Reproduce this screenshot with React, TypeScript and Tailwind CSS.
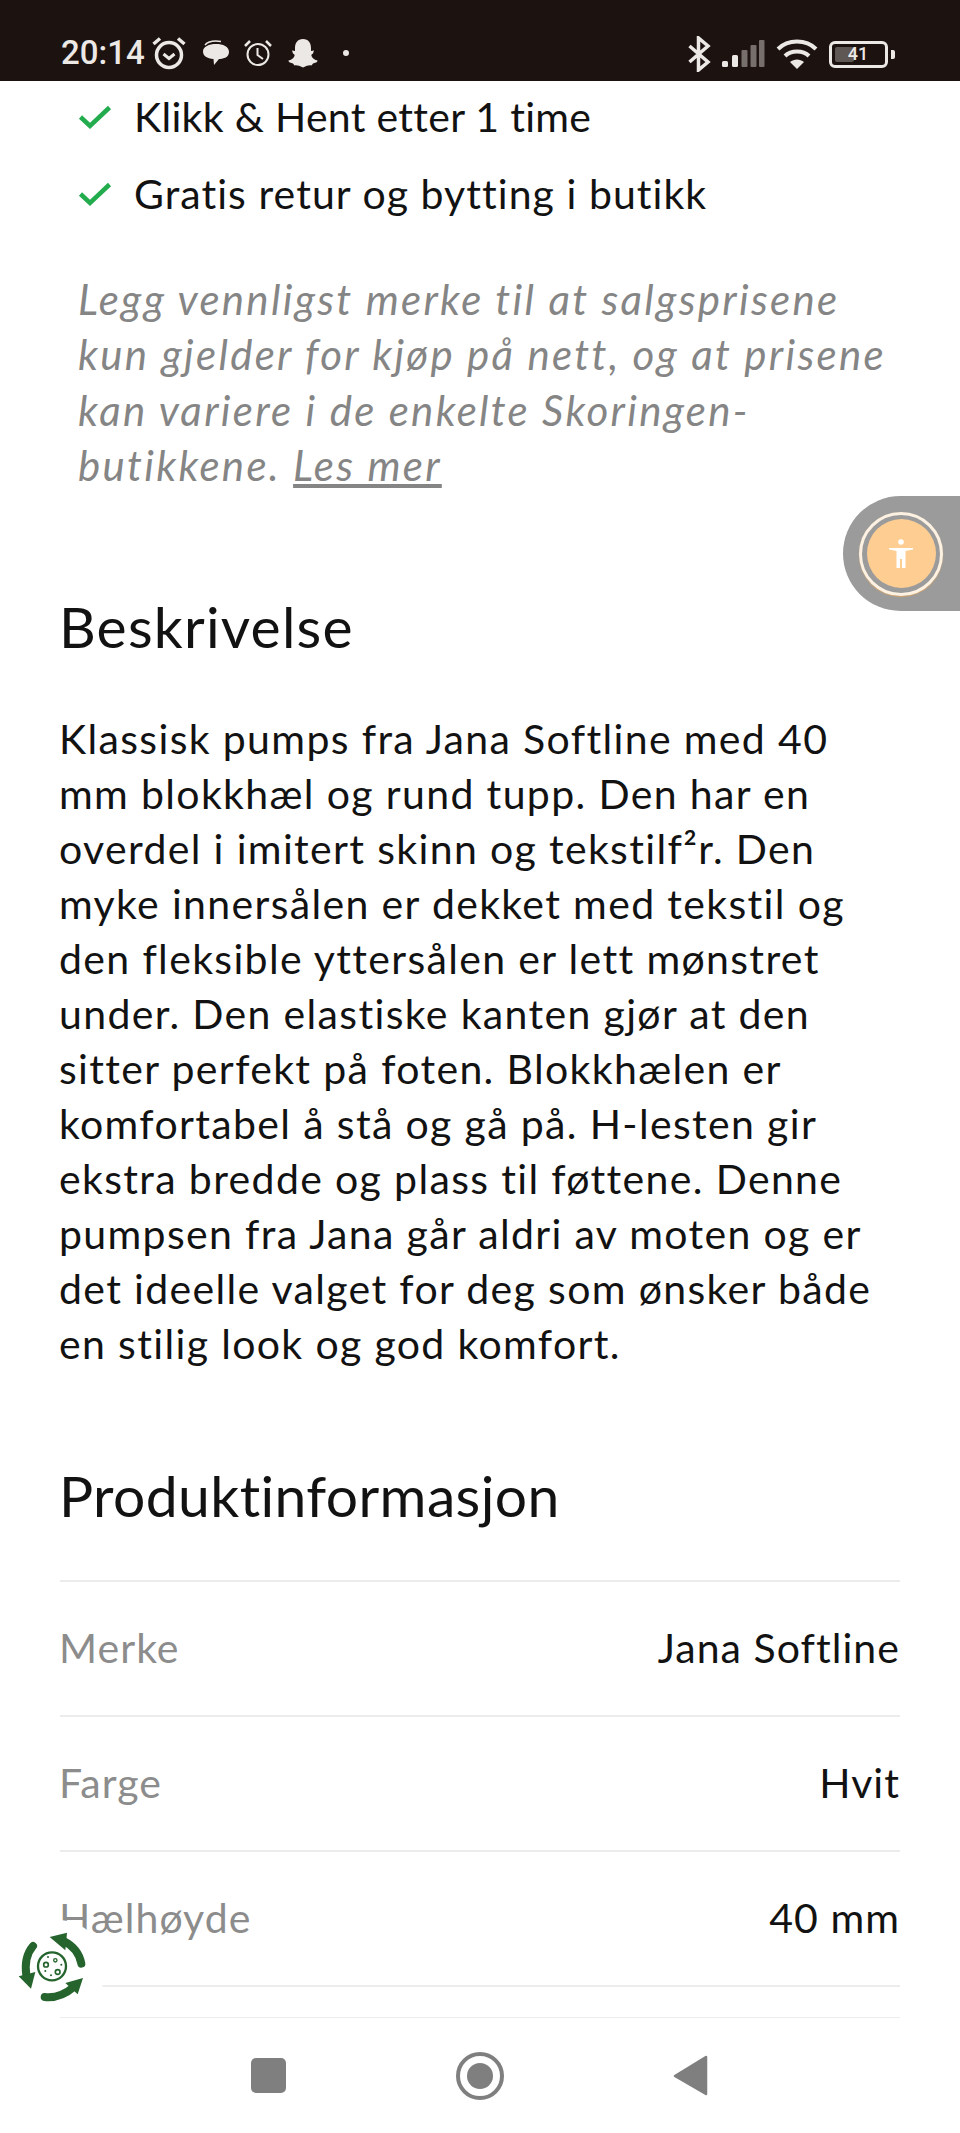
import React from "react";

const rows = [
  { label: "Merke", value: "Jana Softline" },
  { label: "Farge", value: "Hvit" },
  { label: "Hælhøyde", value: "40 mm" },
];

const CheckMark = () => (
  <svg width="34" height="26" viewBox="0 0 34 26" className="shrink-0">
    <path d="M2.5 13 L12 22 L31.5 3.5" fill="none" stroke="#22ac4d" strokeWidth="4.5" />
  </svg>
);

const StatusBar = () => (
  <div className="h-[81px] bg-[#1c1210] flex items-end pb-[9px] pl-[61px] pr-[65px] justify-between text-[#ece8e5] shrink-0">
    <div className="flex items-center">
      <span className="font-['Roboto',sans-serif] font-medium text-[33px] leading-[38px] mr-[6px]">20:14</span>
      <svg width="36" height="34" viewBox="0 0 36 34" fill="none" stroke="currentColor">
        <circle cx="18" cy="19" r="12.5" strokeWidth="3.5" />
        <path d="M12.5 18 L18 22.5 L23.5 18" strokeWidth="3" />
        <path d="M2.5 8 L9 2.5 M33.5 8 L27 2.5" strokeWidth="3.5" />
      </svg>
      <svg width="28" height="26" viewBox="0 0 28 26" className="ml-[15px]" fill="currentColor">
        <path d="M14 4 C21 4 27 6.500 27 12 C27 17 22 19 17 19 L12 25 L11.500 19 C5 18.500 1 16 1 11.500 C1 6.500 7 4 14 4 Z" />
        <path d="M3 5 C6 1.500 12 0.500 19 1.500" fill="none" stroke="currentColor" strokeWidth="1.500" />
      </svg>
      <svg width="30" height="30" viewBox="0 0 30 30" className="ml-[13px]" fill="none" stroke="currentColor" strokeWidth="2">
        <circle cx="15" cy="16.500" r="10.500" />
        <path d="M14.500 10 V17 L20 21" />
        <path d="M2 8 L7 3 M28 8 L23 3" strokeWidth="2.500" />
      </svg>
      <svg width="30" height="30" viewBox="0 0 30 30" className="ml-[15px]" fill="currentColor">
        <path d="M15 1 C20.500 1 23 5 23 10 L23 13 L26 12.500 L25 15.500 C24 16.500 23 16.500 23.500 18 C24.500 20.500 27 22 29.500 22.500 C29.500 24.500 27 25 25 25.500 L23.500 27.500 C20.500 27 19 28 15 29.500 C11 28 9.500 27 6.500 27.500 L5 25.500 C3 25 .5 24.500 .5 22.500 C3 22 5.500 20.500 6.500 18 C7 16.500 6 16.500 5 15.500 L4 12.500 L7 13 L7 10 C7 5 9.500 1 15 1 Z" />
      </svg>
      <span className="ml-[25px] w-[6px] h-[6px] rounded-full bg-current" />
    </div>
    <div className="flex items-center gap-[10px]">
      <svg width="24" height="36" viewBox="0 0 24 36" fill="none" stroke="currentColor" strokeWidth="3.500">
        <path d="M2.500 10 L21 26 L11.500 34 V2 L21 10 L2.500 26" />
      </svg>
      <svg width="44" height="28" viewBox="0 0 44 28">
        <rect x="1" y="21" width="6" height="6" rx="1.500" fill="#ece8e5" />
        <rect x="11" y="15" width="6" height="12" rx="1.500" fill="#ece8e5" />
        <rect x="20.500" y="10" width="6" height="17" rx="1" fill="#766f6c" />
        <rect x="29.500" y="5" width="6" height="22" rx="1" fill="#766f6c" />
        <rect x="38" y="0" width="5.500" height="27" rx="1" fill="#766f6c" />
      </svg>
      <svg width="42" height="32" viewBox="0 0 42 32" fill="none" stroke="currentColor" strokeWidth="4" className="ml-[1px]">
        <path d="M2 11 C12 1 30 1 40 11" />
        <path d="M9 18 C15 12 27 12 33 18" />
        <path d="M21 31 L14 24 C18 20.500 24 20.500 28 24 Z" fill="currentColor" stroke="none" />
      </svg>
      <div className="flex items-center ml-[1px]">
        <div className="relative w-[59px] h-[27px] rounded-[6px] border-[3px] border-current p-[3px]">
          <div className="h-full w-[41%] bg-[#5e5754] rounded-[2px]" />
          <span className="absolute inset-0 flex items-center justify-center font-['Roboto',sans-serif] font-medium text-[18px] leading-none pr-[1px]">41</span>
        </div>
        <div className="w-[4px] h-[9px] ml-[3px] bg-current rounded-r-[2px]" />
      </div>
    </div>
  </div>
);

const NavBar = () => (
  <div className="h-[115px] bg-white flex items-center absolute left-0 right-0 bottom-0 pl-[251px]">
    <div className="w-[35px] h-[35px] rounded-[5px] bg-[#7f7f7f]" />
    <div className="w-[48px] h-[48px] rounded-full border-[4px] border-[#7f7f7f] flex items-center justify-center ml-[170px]">
      <div className="w-[26px] h-[26px] rounded-full bg-[#7f7f7f]" />
    </div>
    <svg width="36" height="42" viewBox="0 0 36 42" className="ml-[169px]">
      <path d="M33 2 V39 L2 21 Z" fill="#7f7f7f" stroke="#7f7f7f" strokeWidth="2.500" strokeLinejoin="round" />
    </svg>
  </div>
);

export default function App() {
  return (
    <div className="relative h-[2133px] w-[960px] overflow-hidden bg-white flex flex-col font-['Lato',sans-serif] text-[#121212] [font-variant-ligatures:none]">
      <StatusBar />
      <main className="pl-[59px] pr-[60px]">
        <ul className="pl-[19px] pt-[8px] flex flex-col gap-[22px] text-[41px] leading-[55px] tracking-[1.05px]">
          <li className="flex items-center gap-[22px] tracking-[0.3px]"><CheckMark />Klikk &amp; Hent etter 1 time</li>
          <li className="flex items-center gap-[22px]"><CheckMark />Gratis retur og bytting i butikk</li>
        </ul>
        <p className="mt-[51px] pl-[19px] text-[42px] leading-[55.4px] italic text-[#858585] tracking-[2.3px]">
          Legg vennligst merke til at salgsprisene kun gjelder for kjøp på nett, og at prisene kan variere i de enkelte Skoringen-butikkene. <a className="underline" href="#">Les mer</a>
        </p>
        <h2 className="mt-[99px] text-[57px] leading-[66px] font-normal tracking-[1.2px]">Beskrivelse</h2>
        <p className="mt-[52px] pr-[10px] text-[41px] leading-[55px] tracking-[1.35px]">
          Klassisk pumps fra Jana Softline med 40 mm blokkhæl og rund tupp. Den har en overdel i imitert skinn og tekstilf²r. Den myke innersålen er dekket med tekstil og den fleksible yttersålen er lett mønstret under. Den elastiske kanten gjør at den sitter perfekt på foten. Blokkhælen er komfortabel å stå og gå på. H-lesten gir ekstra bredde og plass til føttene. Denne pumpsen fra Jana går aldri av moten og er det ideelle valget for deg som ønsker både en stilig look og god komfort.
        </p>
        <h2 className="mt-[91px] text-[57px] leading-[66px] font-normal tracking-[0.4px]">Produktinformasjon</h2>
        <dl className="mt-[52px] ml-[1px] border-t-2 border-[#ececec]">
          {rows.map(row => <div key={row.label} className="h-[135px] border-b-2 border-[#ececec] flex items-center justify-between text-[41px] tracking-[1.05px]">
              <dt className="text-[#8c8c8c] -ml-[1px]">{row.label}</dt>
              <dd>{row.value}</dd>
            </div>)}
          <div className="h-[32px] border-b-2 border-[#ececec]" />
        </dl>
      </main>

      <div className="absolute right-0 top-[496px] w-[117px] h-[115px] bg-[#9b9b9b] rounded-l-[58px] flex items-center pl-[16px]">
        <div className="w-[84px] h-[84px] rounded-full border-[3px] border-[#fdf1e2] shadow-[0_1px_1px_#d9a566] flex items-center justify-center">
          <div className="w-[69px] h-[69px] rounded-full bg-[#fdcd92] flex items-center justify-center">
            <svg width="24" height="29" viewBox="0 0 24 29" fill="white">
              <circle cx="12" cy="3" r="2.800" />
              <path d="M0 9 H24 V10.500 L16.500 12 V29 H13 V20 H11 V29 H7.500 V12 L0 10.500 Z" />
            </svg>
          </div>
        </div>
      </div>

      <NavBar />

      <div className="absolute left-[10px] top-[1920px] w-[96px] h-[96px] rounded-full bg-white">
        <svg width="80" height="80" viewBox="0 0 240 240" fill="none" stroke="#25642c" className="absolute left-[2px] top-[7px]">
          <path d="M155 42 Q200 65 208 110" strokeWidth="24" strokeLinecap="round" />
          <path d="M113 30 L165 17 L160 70 Z" fill="#25642c" stroke="none" />
          <path d="M63 57 Q35 90 43 145" strokeWidth="24" strokeLinecap="round" />
          <path d="M20 148 L70 135 L57 185 Z" fill="#25642c" stroke="none" />
          <path d="M98 210 Q145 215 185 180" strokeWidth="24" strokeLinecap="round" />
          <path d="M213 153 L160 168 L197 202 Z" fill="#25642c" stroke="none" />
          <circle cx="120" cy="118" r="42" strokeWidth="7" />
          <circle cx="102" cy="113" r="7" strokeWidth="5" />
          <circle cx="137" cy="135" r="7" strokeWidth="5" />
          <circle cx="130" cy="100" r="5" strokeWidth="4" />
          <g fill="#25642c" stroke="none">
            <circle cx="108" cy="90" r="3" />
            <circle cx="148" cy="113" r="3" />
            <circle cx="100" cy="132" r="3" />
            <circle cx="117" cy="145" r="3" />
          </g>
        </svg>
      </div>
    </div>
  );
}
